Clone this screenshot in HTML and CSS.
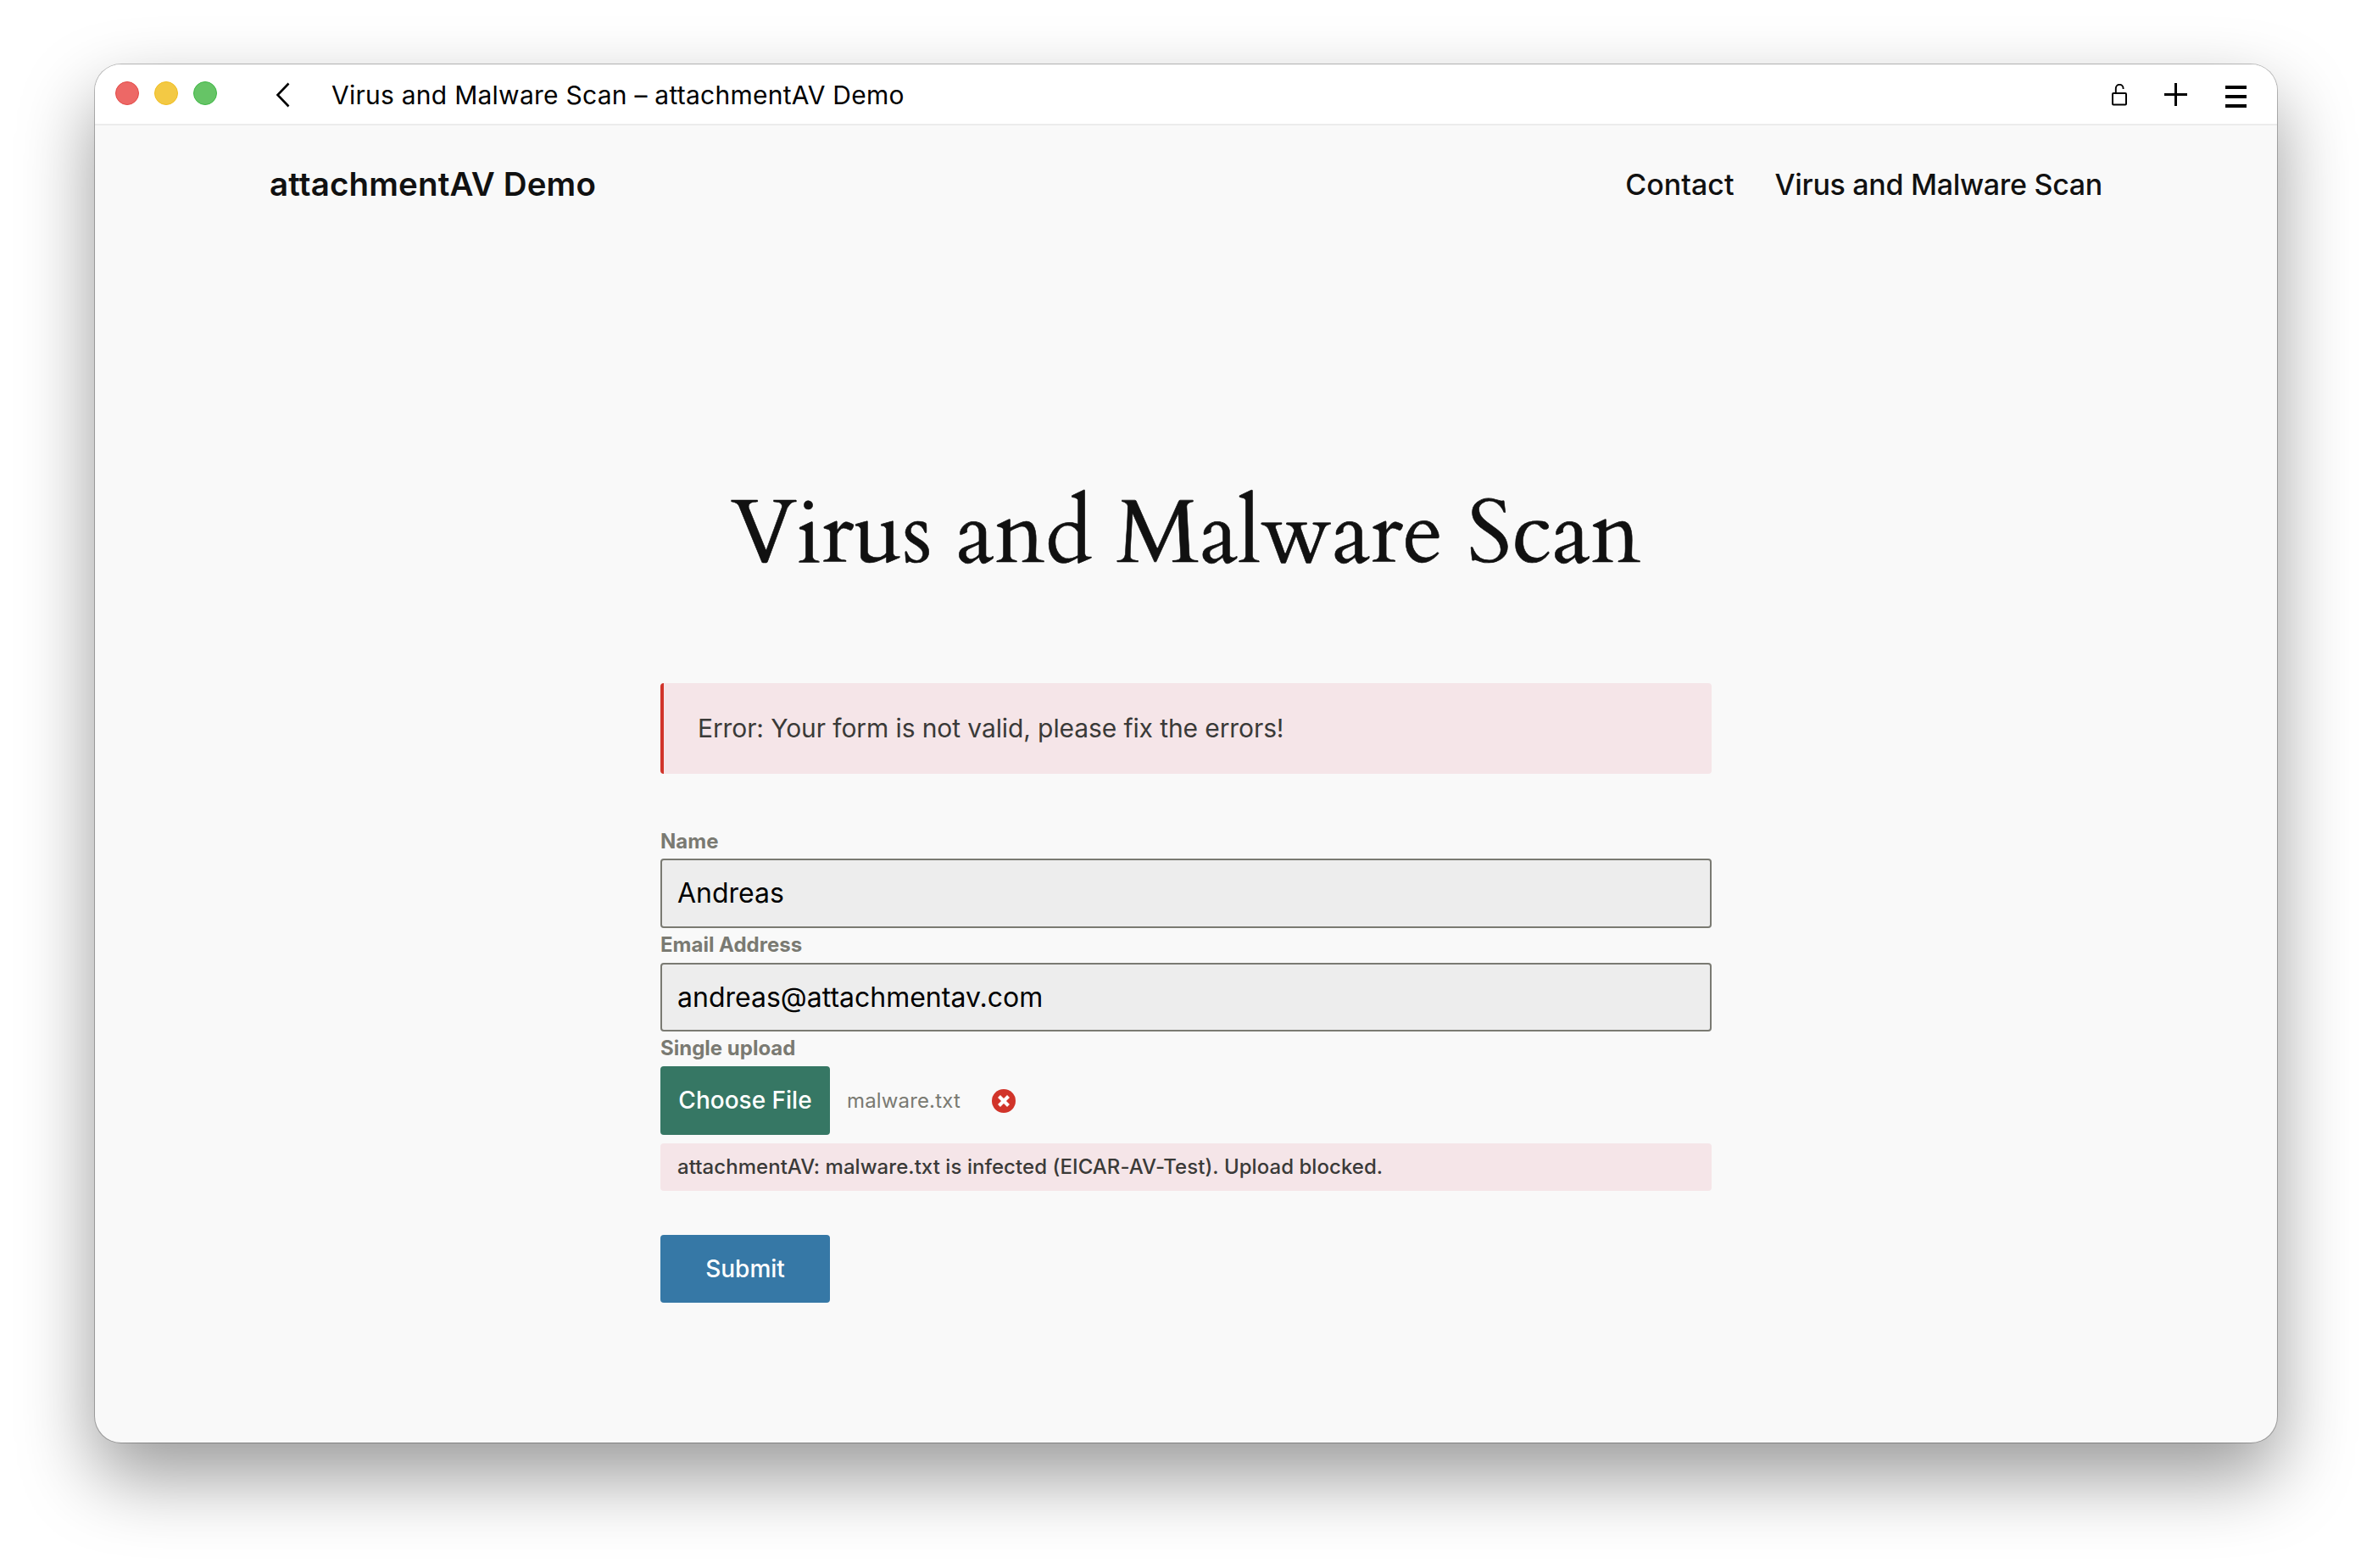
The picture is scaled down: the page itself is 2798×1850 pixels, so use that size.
FILE: index.html
```html
<!DOCTYPE html>
<html lang="en">
<head>
<meta charset="utf-8">
<title>Virus and Malware Scan – attachmentAV Demo</title>
<link rel="stylesheet" href="styles.css">
</head>
<body>
<div class="window">
  <div class="titlebar">
    <div class="lights"><span class="light red"></span><span class="light yellow"></span><span class="light green"></span></div>
    <svg class="back" width="18" height="30" viewBox="0 0 18 30"><path d="M15.5 1.500 2.500 15l13 13.500" fill="none" stroke="#000" stroke-width="2.600"/></svg>
    <div class="page-title">Virus and Malware Scan – attachmentAV Demo</div>
    <div class="tools">
      <svg width="18" height="26" viewBox="0 0 18 26"><path d="M4.800 11V5.500a4.200 4.500 0 0 1 8.800 0V6" fill="none" stroke="#000" stroke-width="1.900"/><rect x="1" y="11" width="16" height="13.500" rx="1" fill="none" stroke="#000" stroke-width="2"/></svg>
      <svg class="plus" width="27" height="27" viewBox="0 0 27 27"><path d="M13.500 0v27M0 13.500h27" stroke="#000" stroke-width="3"/></svg>
      <svg class="menu" width="25" height="26" viewBox="0 0 25 26"><path d="M0 2h25M0 13h25M0 24h25" stroke="#000" stroke-width="3.800"/></svg>
    </div>
  </div>
  <header class="site-header">
    <div class="brand">attachmentAV Demo</div>
    <nav class="nav"><a class="nav-contact">Contact</a><a class="nav-scan">Virus and Malware Scan</a></nav>
  </header>
  <main class="content">
    <h1 class="heading">Virus and Malware Scan</h1>
    <form class="form">
      <div class="alert"><span class="alert-text">Error: Your form is not valid, please fix the errors!</span></div>
      <div class="label label-name">Name</div>
      <div class="field field-name"><span>Andreas</span></div>
      <div class="label">Email Address</div>
      <div class="field"><span>andreas@attachmentav.com</span></div>
      <div class="label">Single upload</div>
      <div class="upload">
        <div class="button choose">Choose File</div>
        <span class="file">malware.txt</span>
        <svg class="remove" width="28" height="28" viewBox="0 0 28 28"><circle cx="14" cy="14" r="14" fill="#d1342a"/><path d="M8.500 8.500l11 11M19.500 8.500l-11 11" stroke="#fff" stroke-width="4.200"/></svg>
      </div>
      <div class="file-error"><span>attachmentAV: malware.txt is infected (EICAR-AV-Test). Upload blocked.</span></div>
      <div class="button submit">Submit</div>
    </form>
  </main>
</div>
</body>
</html>
```
FILE: styles.css
```css
* { box-sizing: border-box; }
body {
  margin: 0;
  padding: 76px 112px 0;
  height: 1850px;
  background: #fff;
  font-family: Inter, "Liberation Sans", sans-serif;
  white-space: nowrap;
  overflow: hidden;
}
.window {
  width: 2574px;
  height: 1626px;
  border-radius: 31px;
  background: #f9f9f9;
  overflow: hidden;
  box-shadow: 0 0 0 1px rgba(0, 0, 0, .25), 0 40px 88px rgba(0, 0, 0, .4);
}
.titlebar {
  height: 72px;
  padding: 0 36px 2px 24px;
  background: #fff;
  border-bottom: 2px solid #ececec;
  display: flex;
  align-items: center;
}
.lights { display: flex; gap: 18px; }
.light { width: 28px; height: 28px; border-radius: 50%; border: 1px solid; }
.red { background: #ed6866; border-color: #e24b48; }
.yellow { background: #f3c944; border-color: #efbd22; }
.green { background: #66c466; border-color: #3fb746; }
.back { margin-left: 69px; position: relative; top: 2px; }
.page-title {
  margin-left: 48px;
  font-size: 30px;
  line-height: 36px;
  letter-spacing: .25px;
  position: relative;
  top: 2px;
  color: #000;
}
.tools { margin-left: auto; display: flex; align-items: center; position: relative; top: 2px; }
.plus { margin-left: 44px; position: relative; top: -1px; }
.menu { margin-left: 45px; position: relative; top: 2px; }
.site-header {
  height: 138px;
  padding: 0 206px;
  display: flex;
  justify-content: space-between;
  align-items: center;
  color: #111;
}
.brand { font-size: 38.500px; font-weight: 600; letter-spacing: .15px; }
.nav { display: flex; gap: 48px; font-size: 34px; font-weight: 500; }
.nav-scan { letter-spacing: -.3px; }
.content { display: flex; flex-direction: column; align-items: center; }
.heading {
  margin: 284px 0 116px;
  font-family: Cardo, "Liberation Serif", serif;
  font-weight: 400;
  font-size: 104.800px;
  line-height: 120px;
  color: #111;
  -webkit-text-stroke: .6px #111;
}
.form { width: 1240px; }
.alert {
  height: 107px;
  margin-bottom: 59px;
  padding: 0 0 2px 40px;
  display: flex;
  align-items: center;
  background: #f5e5e8;
  border-left: 4px solid #d1342a;
  border-radius: 4px;
  font-size: 30px;
  letter-spacing: -.1px;
  color: #3a3a38;
}
.label {
  height: 41px;
  padding-bottom: 2px;
  display: flex;
  align-items: center;
  font-size: 24px;
  font-weight: 700;
  color: #7a7a72;
}
.label-name { padding-bottom: 0; }
.field {
  height: 81px;
  padding-left: 18px;
  display: flex;
  align-items: center;
  background: #ededed;
  border: 2px solid #7a7a72;
  border-radius: 4px;
  font-size: 32px;
  color: #000;
}
.field-name { height: 82px; padding-bottom: 1px; }
.upload { display: flex; align-items: center; }
.button {
  width: 200px;
  height: 81px;
  display: flex;
  align-items: center;
  justify-content: center;
  border-radius: 4px;
  font-size: 28px;
  font-weight: 500;
  color: #fff;
}
.choose { padding-bottom: 1px; background: #367764; }
.file { margin-left: 20px; width: 135px; font-size: 24px; letter-spacing: .15px; color: #7a7a72; }
.remove { margin-left: 36px; }
.file-error {
  height: 56px;
  margin: 10px 0 52px;
  padding: 0 0 2px 20px;
  display: flex;
  align-items: center;
  background: #f5e5e8;
  border-radius: 4px;
  font-size: 24px;
  font-weight: 500;
  letter-spacing: .05px;
  color: #3a3a38;
}
.submit { height: 80px; background: #3678a6; }
```
